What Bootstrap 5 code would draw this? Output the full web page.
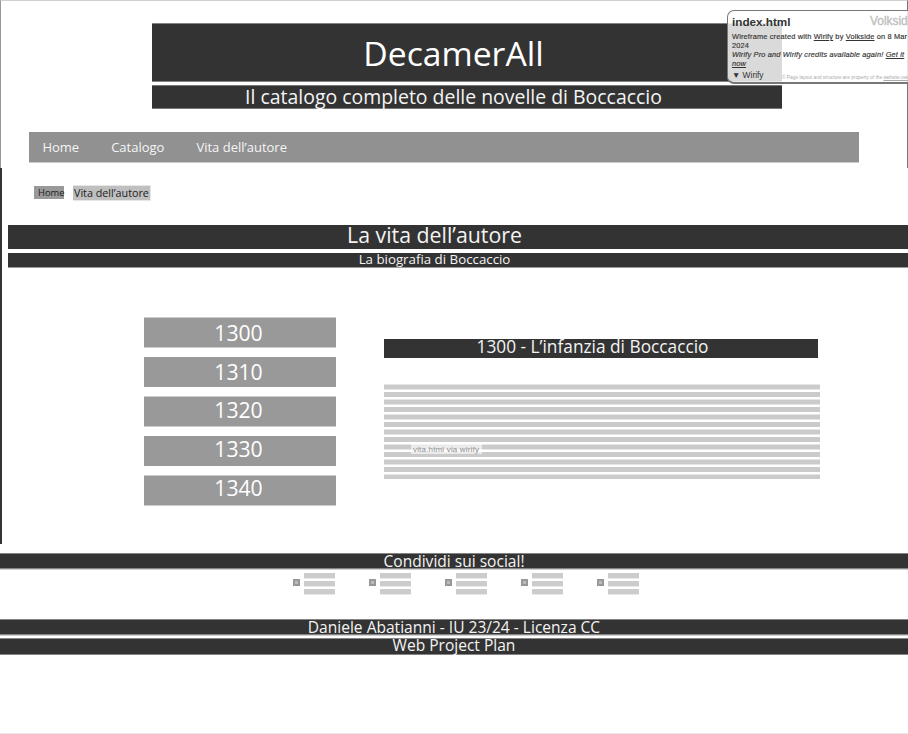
<!DOCTYPE html>
<html lang="it">
<head>
<meta charset="utf-8">
<meta name="viewport" content="width=device-width, initial-scale=1">
<title>DecamerAll</title>
<link href="https://cdn.jsdelivr.net/npm/bootstrap@5.3.0/dist/css/bootstrap.min.css" rel="stylesheet">
<style>
body{font-family:"Open Sans","Noto Sans",sans-serif;background:#fff;height:734px;overflow:hidden;color:#fff}
h1,h2,h3,p{margin:0;font-weight:400;white-space:nowrap}
.bar{background:#333;color:#f4f4f4;text-align:center}
.page{height:734px;border-bottom:1px solid #e8e8e8}
.top{height:168px;border:solid #999;border-width:1px 1px 0;border-top-color:#d0d0d0;border-right-color:#777;padding-top:22px}
.brand{width:630px;margin-left:151px}
.brand h1{height:59px;font-size:33.7px;line-height:58px;padding-right:27px;border:solid #858585;border-width:1px 0;color:#fff}
.brand p{height:24px;margin-top:3px;font-size:19.45px;line-height:22px;padding-right:27px;border:solid #777;border-width:1px 0}
.mainnav{width:830px;height:31px;margin:23px 0 0 28px;padding:0 0 0 13.4px;background:#919191;border-bottom:1px solid #ccc;font-size:13px;line-height:30px;gap:32px}
.mainnav a,.crumbs a{color:#f5f5f5;text-decoration:none;white-space:nowrap}
.content{height:376px;border-left:2px solid #2f3437}
.crumbs{padding:17px 0 0 32px;height:57px;gap:9px}
.crumbs a,.crumbs span{color:#1c1c1c;white-space:nowrap}
.crumbs a{width:30px;height:13px;margin-top:1px;padding-left:4px;background:#999;font-size:9.4px;line-height:14px}
.crumbs span{width:78px;height:16px;padding-left:1px;background:#bfbfbf;border:1px solid #e6e6e6;border-left-width:0;font-size:10.75px;line-height:15px}
.head{margin-left:6px}
.head h2{height:24px;font-size:21.3px;line-height:20px;padding-right:47px}
.head p{height:15px;margin-top:4px;border-bottom:1px solid #999;font-size:13.3px;line-height:12px;padding-right:47px}
.bio{padding:49px 0 0 142px;gap:48px}
.years{width:192px;gap:9px}
.years div{height:31px;background:#999;border:solid #ccc;border-width:1px 0;font-size:21.2px;line-height:30px;text-align:center;padding-right:3px}
.years div:nth-child(even){height:30px;border:0}
.years div:nth-child(3){line-height:26px}
.years div:nth-child(4){line-height:26px}
.years div:nth-child(5){line-height:24px}
.story{width:436px;padding-top:22px}
.story h3{width:434px;height:19px;font-size:17.3px;line-height:15px;padding-right:17px}
.copy{height:95px;margin-top:26px;padding:59px 0 0 27px;background:repeating-linear-gradient(#e6e6e6 0 1px,#cbcbcb 1px 5px,#e6e6e6 5px 6px,#fff 6px 8px,#cbcbcb 8px 13px,#fff 13px 15px)}
.copy p{width:71px;height:11px;padding-left:2px;background:rgba(255,255,255,.6);color:#8e8e8e;font:8px/13px "Liberation Sans",Arial,sans-serif;letter-spacing:.17px}
.foot{padding-top:9px;font-size:15.55px}
.foot .bar{border:solid #858585;border-width:1px 0;box-shadow:0 1px #d0d0d0}
.share{height:16px;line-height:14px}
.icons{height:50px;padding:4px 0 0 293px}
.soc{width:76px;gap:4px}
.soc i{width:7px;height:7px;margin-top:6px;background:#bbb;border:2px solid #989898}
.soc b{width:31px;height:22px;background:linear-gradient(#ccc 0 5px,#e8e8e8 5px 6px,#fff 6px 8px,#ccc 8px 13px,#e8e8e8 13px 14px,#fff 14px 16px,#ccc 16px 21px,#e8e8e8 21px)}
.credit{height:16px;line-height:14px}
.foot .plan{height:17px;margin-top:3px;line-height:13px;box-shadow:none}
.note{position:absolute;left:727px;top:10px;width:200px;height:74px;border:1px solid #777;border-bottom-width:2px;border-radius:7px;background:rgba(255,255,255,.82);color:#333;font:7.4px/9px "Liberation Sans",Arial,sans-serif;padding:4px 0 0 4px;white-space:nowrap;overflow:hidden}
.note strong{width:138px;font-size:11.7px;line-height:13px}
.note .vendor{font-size:11.9px;line-height:13px;color:#bdbdbd;-webkit-text-stroke:.3px #bdbdbd}
.note .info{margin-top:4px;-webkit-text-stroke:.15px #333;letter-spacing:.16px}
.note .menu-row{font-size:8.4px;line-height:13px;margin-top:1px}
.note .menu-row span{width:50px;flex:none}
.note small{font-size:4.8px;color:#aaa;margin-top:4px;line-height:10px}
</style>
<script src="https://cdn.jsdelivr.net/npm/bootstrap@5.3.0/dist/js/bootstrap.bundle.min.js"></script>
</head>
<body>
<div class="page d-flex flex-column overflow-hidden position-relative">
  <header class="top">
    <div class="brand">
      <h1 class="bar">DecamerAll</h1>
      <p class="bar">Il catalogo completo delle novelle di Boccaccio</p>
    </div>
    <nav class="mainnav d-flex"><a href="#">Home</a><a href="#">Catalogo</a><a href="#">Vita dell’autore</a></nav>
  </header>
  <main class="content">
    <nav class="crumbs d-flex align-items-start"><a href="#">Home</a><span>Vita dell’autore</span></nav>
    <div class="head">
      <h2 class="bar">La vita dell’autore</h2>
      <p class="bar">La biografia di Boccaccio</p>
    </div>
    <div class="bio d-flex">
      <div class="years d-flex flex-column"><div>1300</div><div>1310</div><div>1320</div><div>1330</div><div>1340</div></div>
      <section class="story">
        <h3 class="bar">1300 - L’infanzia di Boccaccio</h3>
        <div class="copy"><p>vita.html via wirify</p></div>
      </section>
    </div>
  </main>
  <footer class="foot">
    <p class="bar share">Condividi sui social!</p>
    <div class="icons d-flex">
      <div class="soc d-flex"><i></i><b></b></div><div class="soc d-flex"><i></i><b></b></div><div class="soc d-flex"><i></i><b></b></div><div class="soc d-flex"><i></i><b></b></div><div class="soc d-flex"><i></i><b></b></div>
    </div>
    <p class="bar credit">Daniele Abatianni - IU 23/24 - Licenza CC</p>
    <p class="bar plan">Web Project Plan</p>
  </footer>
  <aside class="note">
    <div class="d-flex"><strong>index.html</strong><span class="vendor">Volkside</span></div>
    <div class="info">Wireframe created with <u>Wirify</u> by <u>Volkside</u> on 8 Mar<br>2024<br><em>Wirify Pro and Wirify credits available again! <u>Get it</u><br><u>now</u></em></div>
    <div class="menu-row d-flex"><span>▼ Wirify</span><small>© Page layout and structure are property of the <u>website owner</u></small></div>
  </aside>
</div>
</body>
</html>
